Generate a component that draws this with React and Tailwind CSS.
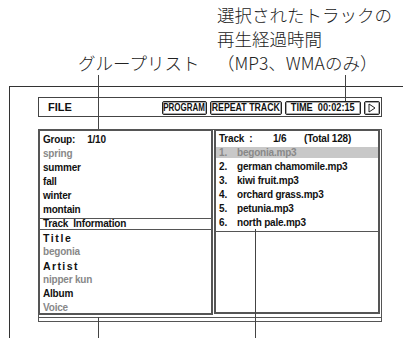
import React from "react";

const groups = ["spring", "summer", "fall", "winter", "montain"];
const tracks = ["begonia.mp3", "german chamomile.mp3", "kiwi fruit.mp3", "orchard grass.mp3", "petunia.mp3", "north pale.mp3"];

function Btn({ w, sx, children }) {
  return (
    <div className={`${w} h-[14px] border border-[#222] shadow-[inset_0_0_0_1px_#aaa] rounded-[2px] flex items-center justify-center text-[10px] font-bold text-[#111] leading-none`}>
      <span className={`inline-block ${sx} whitespace-nowrap`}>{children}</span>
    </div>
  );
}

export default function App() {
  return (
    <div className="relative w-[403px] h-[338px] overflow-hidden bg-white" style={{ fontFamily: "'Liberation Sans', Arial, sans-serif" }}>
      {/* annotations */}
      <div
        className="flex items-end h-[86px] pb-[11px] text-[17.5px] leading-[24px] font-light text-[#222]"
        style={{ fontFamily: "'Noto Sans CJK JP', 'Noto Sans', sans-serif" }}
      >
        <div className="w-[217px] pl-[78px] whitespace-nowrap">グループリスト</div>
        <div className="whitespace-nowrap">
          <div>選択されたトラックの</div>
          <div>再生経過時間</div>
          <div>（MP3、WMAのみ）</div>
        </div>
      </div>

      {/* outer frame */}
      <div className="ml-[9px] h-[252px] border-t border-l border-[#333] pl-[28px] pt-[10px]">
        {/* toolbar */}
        <div className="w-[344px] h-[20px] border border-[#444] flex items-center">
          <span className="pl-[9px] text-[11px] font-bold text-[#111]">FILE</span>
          <div className="ml-auto self-end pb-[1px] pr-[1px] flex gap-[3px]">
            <Btn w="w-[45px]" sx="scale-x-[0.8]">PROGRAM</Btn>
            <Btn w="w-[72px]" sx="scale-x-[0.88]">REPEAT TRACK</Btn>
            <Btn w="w-[76px]" sx="scale-x-[0.92]">TIME&nbsp;&nbsp;00:02:15</Btn>
            <div className="w-[16px] h-[14px] border border-[#222] shadow-[inset_0_0_0_1px_#aaa] rounded-[2px] flex items-center justify-center">
              <svg width="8" height="10" viewBox="0 0 8 10">
                <path d="M1 1 L7 5 L1 9 Z" fill="none" stroke="#222" strokeWidth="1" />
              </svg>
            </div>
          </div>
        </div>

        {/* panels */}
        <div className="mt-[12px] w-[344px] h-[193px] border border-[#555] flex flex-col">
          <div className="flex -mt-px h-[186px]">
            {/* group list + track info */}
            <div className="-ml-px w-[175px] h-[186px] border-2 border-[#555] overflow-hidden text-[10px] font-bold leading-[14px] tracking-[-0.2px] text-[#111]">
              <div className="pl-[3px] pt-[2px]">
                <span>Group:</span>
                <span className="ml-[12px]">1/10</span>
              </div>
              {groups.map((g, i) => (
                <div key={g} className={`pl-[3px] ${i === 0 ? "text-[#888]" : ""}`}>{g}</div>
              ))}
              <div className="mt-[1px] h-[12px] border-y border-[#555] leading-[10px] pl-[3px]">
                Track&nbsp;&nbsp;Information
              </div>
              <div className="mt-[1px] pl-[3px]">
                <div className="text-[10.5px] tracking-[1.6px]">Title</div>
                <div className="text-[#888]">begonia</div>
                <div className="text-[10.5px] tracking-[1.4px]">Artist</div>
                <div className="text-[#888]">nipper kun</div>
                <div>Album</div>
                <div className="text-[#888]">Voice</div>
              </div>
            </div>

            {/* track list */}
            <div className="ml-[1px] w-[166px] h-[185px] border-2 border-[#555] text-[10px] font-bold leading-[14px] tracking-[-0.2px] text-[#111]">
              <div className="border-b border-[#555] pb-[1px]">
                <div className="pl-[3px] pt-[1px] whitespace-nowrap">
                  <span className="inline-block w-[54px]">Track&nbsp;&nbsp;:</span>
                  <span className="inline-block w-[31px]">1/6</span>
                  <span>(Total 128)</span>
                </div>
                {tracks.map((t, i) => (
                  <div
                    key={t}
                    className={
                      i === 0
                        ? "mt-[1px] mb-[2px] h-[11px] leading-[11px] bg-[#c8c8c8] text-[#888] pl-[3px] whitespace-nowrap"
                        : "pl-[3px] whitespace-nowrap"
                    }
                  >
                    <span className="inline-block w-[18px]">{i + 1}.</span>
                    {t}
                  </div>
                ))}
              </div>
            </div>
          </div>
          <div className="mt-[2px] border-t border-[#555]" />
        </div>
      </div>

      {/* leader lines */}
      <div className="absolute left-[98px] top-[75px] w-px h-[54px] bg-[#444]" />
      <div className="absolute left-[345px] top-[75px] w-px h-[26px] bg-[#444]" />
      <div className="absolute left-[98px] top-[317px] w-px h-[21px] bg-[#444]" />
      <div className="absolute left-[255px] top-[229px] w-px h-[109px] bg-[#444]" />
    </div>
  );
}
